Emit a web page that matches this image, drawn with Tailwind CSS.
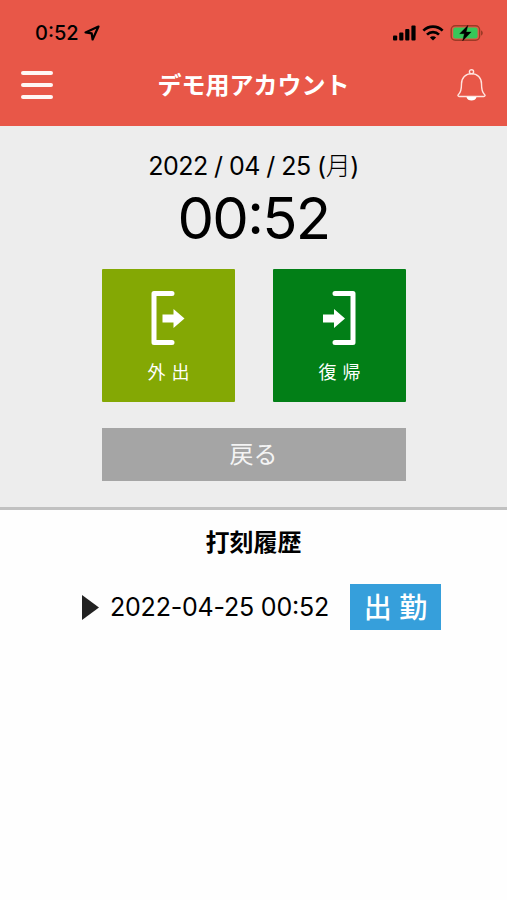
<!DOCTYPE html>
<html lang="ja">
<head>
    <meta charset="UTF-8" />
    <meta name="viewport" content="width=device-width, initial-scale=1.0" />
    <title>打刻</title>
    <script src="https://cdn.jsdelivr.net/npm/@tailwindcss/browser@4"></script>
</head>
<body class="bg-[#fefefe] text-black font-['Inter','Noto_Sans_CJK_JP',sans-serif]">
    <div class="w-[507px] h-[900px] overflow-hidden flex flex-col">
        <!-- Header -->
        <header class="h-[126px] shrink-0 bg-[#e85748] flex flex-col">
            <!-- Status bar -->
            <div class="h-[66px] pl-[35px] pr-[23px] flex items-center justify-between">
                <div class="flex items-center gap-[5px]">
                    <span class="text-[20px] leading-[24px] font-medium tracking-[0px]">0<span class="relative -top-[1.5px]">:</span>52</span>
                    <svg class="w-4 h-4" viewBox="0 0 16 16" fill="none" stroke="#000" stroke-width="2.2" stroke-linejoin="round"><path d="M14.500 1.500 1.500 7.400l6.200 1 .9 6.100z" /></svg>
                </div>
                <div class="flex items-center">
                    <svg class="w-[23px] h-4" viewBox="0 0 23 16"><rect x="0" y="10.5" width="4.2" height="5" rx="1" /><rect x="6.2" y="7.5" width="4.2" height="8" rx="1" /><rect x="12.2" y="4" width="4.2" height="11.5" rx="1" /><rect x="18.4" y="0.5" width="4.2" height="15" rx="1" /></svg>
                    <svg class="ml-[6px] w-[22px] h-4" viewBox="0 0 22 16" fill="none" stroke="#000" stroke-width="2.7"><path d="M1.400 5.600a13.600 13.600 0 0 1 19.200 0" /><path d="M5 9.600a8.500 8.500 0 0 1 12 0" /><path d="M11 15.600 7.900 12.600a4.400 4.400 0 0 1 6.200 0z" fill="#000" stroke="none" /></svg>
                    <svg class="ml-[6px] w-[34px] h-4" viewBox="0 0 34 16"><rect x="1.2" y="0.7" width="28.4" height="14.6" rx="4" fill="none" stroke="#9c3a26" stroke-width="1.4" /><rect x="3.2" y="2.6" width="24.4" height="10.8" rx="2" fill="#36c759" /><path d="M31 5.500c2.400.6 2.400 4.400 0 5z" fill="#9c3a26" /><path d="M18 .3 9.600 8.700h4.700l-1.700 7.200 8.600-9h-5z" stroke="#000" stroke-width=".3" /></svg>
                </div>
            </div>
            <!-- Title bar -->
            <div class="h-[37px] pl-[21px] pr-[21px] flex items-center justify-between">
                <button aria-label="メニュー" class="w-8 flex flex-col gap-2">
                    <span class="h-1 rounded-full bg-[#fff6f4]"></span>
                    <span class="h-1 rounded-full bg-[#fff6f4]"></span>
                    <span class="h-1 rounded-full bg-[#fff6f4]"></span>
                </button>
                <h1 class="mt-[2px] mr-[3px] text-white text-[24px] leading-[30px] font-bold">デモ用アカウント</h1>
                <button aria-label="通知">
                    <svg class="w-[29px] h-8" viewBox="0 0 29 32" fill="none" stroke="#ffe4df" stroke-width="1.4" stroke-linejoin="round"><circle cx="14.5" cy="2.8" r="2.1" /><path d="M14.500 4.600c-6 0-10 4.200-10 10.200 0 6.200-.6 8.700-3 10.700-1 .9-.5 2 .7 2h24.600c1.200 0 1.700-1.100.7-2-2.400-2-3-4.500-3-10.700 0-6-4-10.200-10-10.200z" /><path d="M9.500 28h10c-.6 4.800-9.400 4.800-10 0z" fill="#fff" stroke="none" /></svg>
                </button>
            </div>
        </header>

        <!-- Clock -->
        <section class="h-[384px] shrink-0 bg-[#ededed] border-b-3 border-[#c1c1c1] flex flex-col items-center">
            <p class="mt-[25px] text-[25px] leading-[30px] tracking-[-0.55px]">2022 / 04 / 25 (<span class="font-light">月</span>)</p>
            <p class="mt-[2px] text-[58px] leading-[70px] tracking-[-1.7px]">00<span class="relative -top-[5px]">:</span>52</p>
            <div class="mt-[16px] w-[304px] flex justify-between">
                <button class="w-[133px] h-[133px] rounded-[1px] bg-[#84a804] text-white flex flex-col items-center">
                    <svg class="mt-[22px] w-[34px] h-[54px]" viewBox="0 0 34 54"><path d="M21 2.500H3v49h18" fill="none" stroke="#fff" stroke-width="5" stroke-linecap="round" stroke-linejoin="round" /><path d="M11.500 23.500h11v-5.500l11 9.500-11 9.500v-5.500h-11z" fill="#fff" /></svg>
                    <span class="mt-[16px] ml-[1px] text-[18px] leading-[24px] [word-spacing:1px]">外 出</span>
                </button>
                <button class="w-[133px] h-[133px] rounded-[1px] bg-[#027f17] text-white flex flex-col items-center">
                    <svg class="mt-[22px] w-[34px] h-[54px]" viewBox="0 0 34 54"><path d="M13 2.500h18v49h-18" fill="none" stroke="#fff" stroke-width="5" stroke-linecap="round" stroke-linejoin="round" /><path d="M1 23.500h11v-5.500l11 9.500-11 9.500v-5.500h-11z" fill="#fff" /></svg>
                    <span class="mt-[16px] ml-[1px] text-[18px] leading-[24px] [word-spacing:1px]">復 帰</span>
                </button>
            </div>
            <button class="mt-[26px] pt-px w-[304px] h-[53px] bg-[#a5a5a5] text-[#f4f4f4] text-[24px] leading-[30px]">戻る</button>
        </section>

        <!-- History -->
        <section class="flex flex-col">
            <h2 class="mt-[18px] text-center text-[24px] leading-[30px] font-bold">打刻履歴</h2>
            <div class="mt-[26px] pl-[82px] flex items-center">
                <svg class="w-[17px] h-[25px]" viewBox="0 0 17 25"><path d="M0 0v25l17-12.500z" fill="#222" /></svg>
                <span class="ml-[11px] w-[221px] text-[25px] leading-[30px] tracking-[-0.2px] whitespace-nowrap">2022-04-25 00<span class="relative -top-[2px]">:</span>52</span>
                <span class="ml-[19px] w-[91px] h-[46px] bg-[#369fdb] text-white text-[28px] leading-[49px] font-medium text-center whitespace-nowrap">出 勤</span>
            </div>
        </section>
    </div>
</body>
</html>
